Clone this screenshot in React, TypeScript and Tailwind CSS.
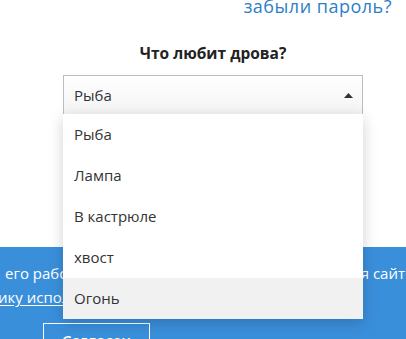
import React from 'react';

const options = ['Рыба', 'Лампа', 'В кастрюле', 'хвост', 'Огонь'];

export default function App() {
  const selected = 'Рыба';
  const active = 'Огонь';

  return (
    <div className="relative h-[339px] w-[406px] overflow-hidden bg-white font-['Open_Sans',sans-serif] text-[#333]">
      {/* top form area */}
      <div className="h-[247px]">
        <div className="flex justify-end pr-[14px] text-[18px] leading-[15px] tracking-[0.5px] text-[#2d80c6]">
          <a className="-mt-[1px]">забыли пароль?</a>
        </div>
        <h3 className="ml-[63px] mt-[30px] w-[300px] text-center text-[15.5px] font-bold leading-[18px] text-[#222]">
          Что любит дрова?
        </h3>
        <div className="relative z-10 ml-[63px] mt-[13px] w-[300px]">
          <div className="flex h-[40px] items-center justify-between border border-[#bdbdbd] bg-gradient-to-b from-white to-[#f4f4f4] pl-[10px] pr-[8px] text-[15px]">
            <span>{selected}</span>
            <svg width="9" height="5" viewBox="0 0 9 5" className="mr-[1px]">
              <path d="M0 5 L4.5 0 L9 5 Z" fill="#333" />
            </svg>
          </div>
          <ul className="absolute left-0 top-[39px] w-[300px] bg-white shadow-[0_4px_14px_rgba(0,0,0,0.18)]">
            {options.map(o => (
              <li
                key={o}
                className={`flex h-[41px] items-center pl-[11px] text-[15px] ${o === active ? 'bg-[#f1f1f1]' : ''}`}
              >
                {o}
              </li>
            ))}
          </ul>
        </div>
      </div>

      {/* cookie banner */}
      <div className="h-[92px] bg-[#3a8fdb] text-[15px] text-white">
        <div className="flex justify-between whitespace-nowrap pl-[5px] pr-[1px] pt-[16px] leading-[20px]">
          <span>его работы, продолжая</span>
          <span>используя сайт</span>
        </div>
        <div className="-ml-[2px] mt-[4px] whitespace-nowrap leading-[20px]">
          <span className="underline underline-offset-2">ику использования cookie</span>
        </div>
        <div className="ml-[43px] mt-[16px] flex h-[40px] w-[107px] items-start justify-center border border-white pt-[8px] text-[15px] font-semibold leading-[16px]">
          Согласен
        </div>
      </div>
    </div>
  );
}
